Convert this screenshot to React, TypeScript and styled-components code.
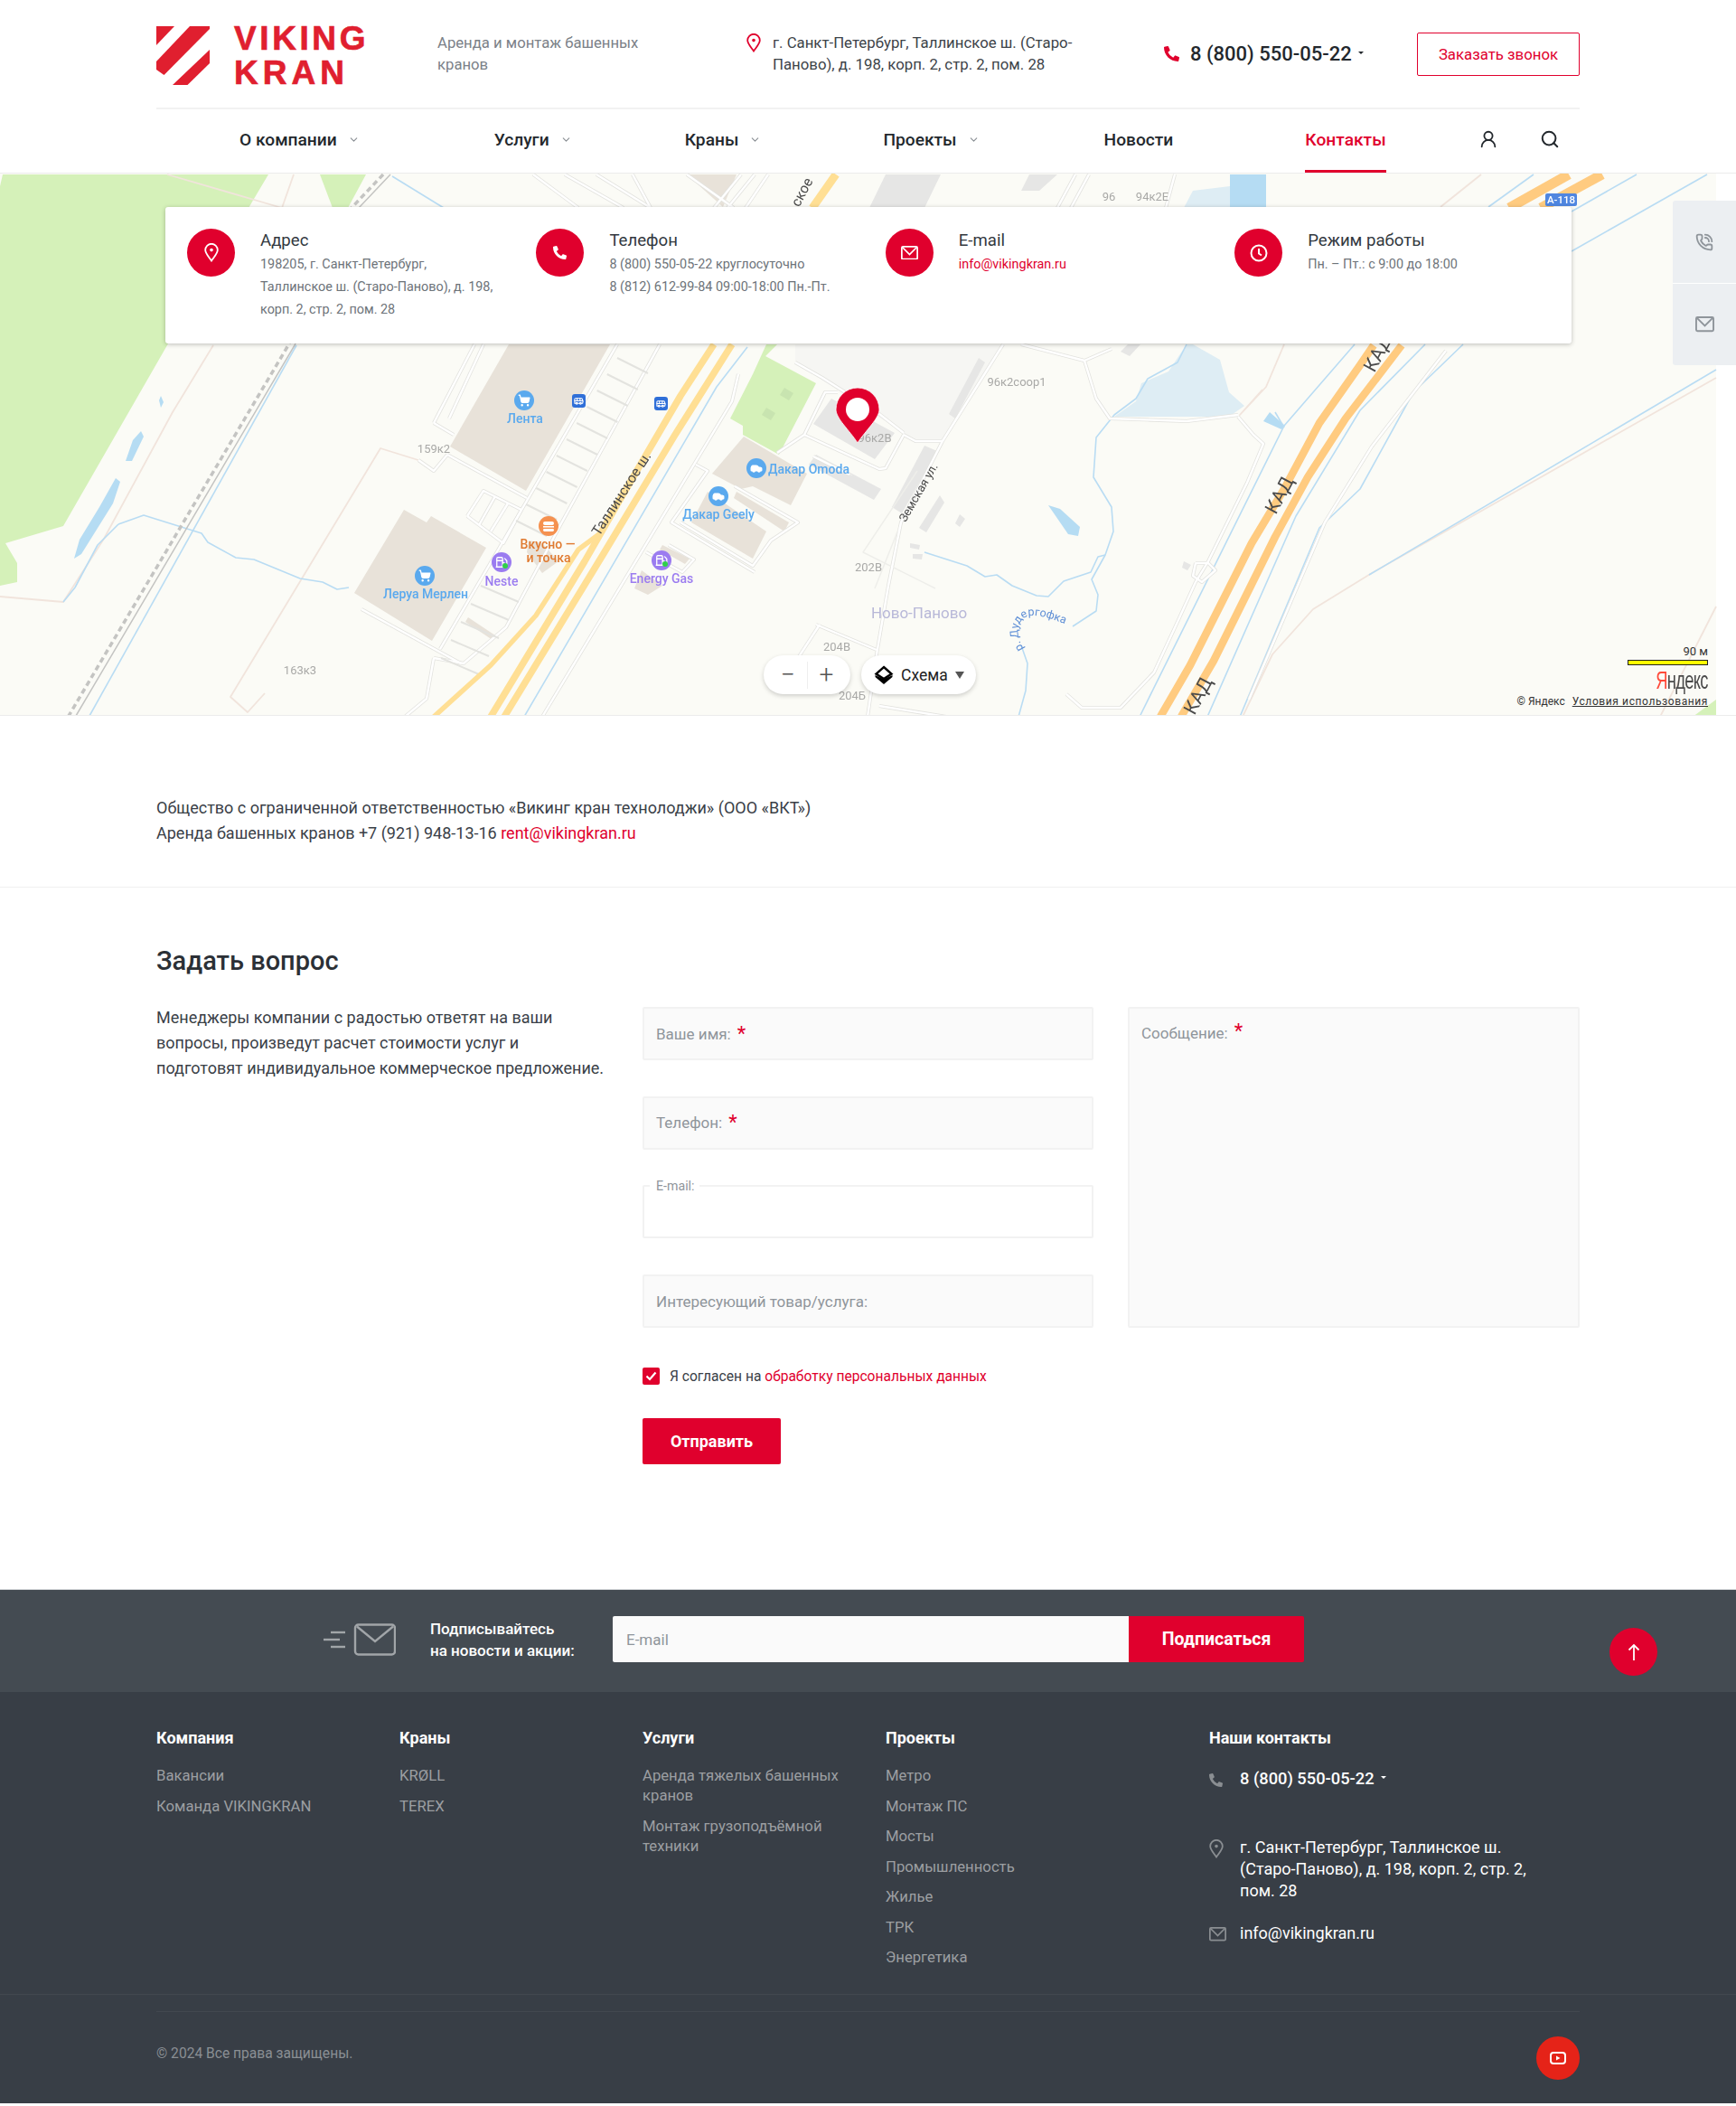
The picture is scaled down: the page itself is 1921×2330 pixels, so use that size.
import React from 'react';
import styled, { createGlobalStyle } from 'styled-components';
import { Bus, Car, ChevronDown, Fuel, PhoneCall, Search, ShoppingCart, UserRound } from 'lucide-react';
import { FaPhoneAlt } from 'react-icons/fa';

const RED = '#e0002d';

const GlobalStyle = createGlobalStyle`
  html, body {
    margin: 0;
    padding: 0;
    background: #fff;
    font-family: Roboto, "Liberation Sans", sans-serif;
    color: #33393f;
  }
  * {
    box-sizing: border-box;
  }
`;

const Container = styled.div`
  width: 1575px;
  margin: 0 auto;
`;

/* header */

const TopRow = styled.div`
  display: grid;
  grid-template-columns: 311px 342px 462px 280px 180px;
  align-items: center;
  height: 121px;
  border-bottom: 2px solid #f2f2f2;
`;

const Logo = styled.div`
  display: flex;
  align-items: center;
  gap: 27px;

  svg {
    margin-top: 3px;
  }
`;

const LogoText = styled.div`
  padding-top: 4px;
  font-family: "Liberation Sans", Arial, sans-serif;
  font-weight: 700;
  font-size: 37px;
  line-height: 38px;
  letter-spacing: 3.6px;
  color: #e01f2f;
  -webkit-text-stroke: 0.7px #e01f2f;

  span {
    letter-spacing: 5px;
  }
`;

const Tagline = styled.div`
  width: 240px;
  font-size: 16.7px;
  line-height: 24px;
  color: #7b8188;
`;

const HeadAddress = styled.div`
  display: flex;
  gap: 13px;
  margin-top: -2px;
  font-size: 16.8px;
  line-height: 24px;
  color: #3d4349;

  svg {
    flex: none;
    margin-top: 2px;
    color: ${RED};
  }
`;

const HeadPhone = styled.div`
  display: flex;
  align-items: center;
  gap: 12px;
  font-size: 22px;
  font-weight: 500;
  color: #23282d;

  svg {
    color: ${RED};
  }
`;

const Caret = styled.span`
  display: inline-block;
  margin: 0 0 6px 7px;
  border-left: 3px solid transparent;
  border-right: 3px solid transparent;
  border-top: 3px solid currentColor;
  vertical-align: middle;
`;

const CallButton = styled.div`
  display: flex;
  align-items: center;
  justify-content: center;
  height: 48px;
  border: 1px solid ${RED};
  border-radius: 2px;
  font-size: 16.8px;
  color: ${RED};
`;

const NavRow = styled.nav`
  display: flex;
  align-items: stretch;
  height: 70px;
  padding-left: 92px;
`;

const NavItem = styled.div<{ $left?: number; $active?: boolean }>`
  display: flex;
  align-items: center;
  gap: 12px;
  margin-left: ${(p) => p.$left ?? 0}px;
  border-bottom: 3px solid ${(p) => (p.$active ? RED : 'transparent')};
  font-size: 19.2px;
  font-weight: 500;
  color: ${(p) => (p.$active ? RED : '#23282d')};

  svg {
    color: #8a8f94;
  }
`;

const NavIcon = styled.div<{ $left: number }>`
  display: flex;
  align-items: center;
  margin-left: ${(p) => p.$left}px;
  margin-bottom: 4px;
  color: #23282d;
`;

/* map */

const MapSection = styled.section`
  position: relative;
  height: 601px;
  overflow: hidden;
  background: #fff;
  border-top: 1px solid #ececec;
  border-bottom: 1px solid #ececec;
`;

const MapCanvas = styled.svg`
  display: block;
  width: 1921px;
  height: 601px;
  filter: blur(0.35px);
`;

const InfoCard = styled.div`
  position: absolute;
  top: 37px;
  left: 183px;
  width: 1556px;
  height: 151px;
  display: grid;
  grid-template-columns: repeat(4, 386.4px);
  padding: 24px 0 0 24px;
  border-radius: 3px;
  background: #fff;
  box-shadow: 0 1px 5px rgba(0, 0, 0, 0.25);
`;

const InfoItem = styled.div`
  display: flex;
  gap: 28px;
`;

const InfoCircle = styled.div`
  flex: none;
  display: flex;
  align-items: center;
  justify-content: center;
  width: 53px;
  height: 53px;
  border-radius: 50%;
  background: ${RED};
  color: #fff;
`;

const InfoTitle = styled.div`
  margin-bottom: 1px;
  font-size: 18.6px;
  line-height: 26px;
  font-weight: 400;
  color: #33393f;
`;

const InfoLine = styled.div`
  font-size: 14.4px;
  line-height: 25px;
  color: #6d7379;

  a {
    color: ${RED};
  }
`;

const SideTabs = styled.div`
  position: absolute;
  top: 30px;
  right: 0;
  width: 70px;
  border-radius: 3px 0 0 3px;
  background: #eceff2;
  color: #8f959b;
`;

const SideTab = styled.div<{ $line?: boolean }>`
  display: flex;
  align-items: center;
  justify-content: center;
  height: 91px;
  border-top: ${(p) => (p.$line ? '1px solid #fff' : 'none')};
`;

const MapControls = styled.div`
  position: absolute;
  top: 533px;
  left: 845px;
  display: flex;
  gap: 12px;
`;

const Pill = styled.div`
  display: flex;
  align-items: center;
  height: 43px;
  padding: 0 6px;
  border-radius: 22px;
  background: #fff;
  box-shadow: 0 2px 5px rgba(0, 0, 0, 0.18);
  color: #222;
`;

const ZoomPart = styled.div<{ $line?: boolean }>`
  display: flex;
  align-items: center;
  justify-content: center;
  width: 42px;
  height: 30px;
  border-left: ${(p) => (p.$line ? '1px solid #eee' : 'none')};
  font-size: 28px;
  font-weight: 300;
  color: #555;
`;

const SchemaPill = styled(Pill)`
  gap: 8px;
  width: 127px;
  padding: 0 0 0 14px;
  font-size: 17.5px;
`;

const Attribution = styled.div`
  position: absolute;
  top: 522px;
  right: 31px;
  display: flex;
  flex-direction: column;
  align-items: flex-end;
  font-size: 12px;
  color: #333;
`;

const ScaleLabel = styled.div`
  font-size: 13px;
  line-height: 14px;
`;

const ScaleBar = styled.div`
  width: 89px;
  height: 6px;
  margin-top: 2px;
  border: 1px solid #222;
  background: #ffff00;
`;

const YandexMark = styled.div`
  margin-top: 4px;
  font-family: "Liberation Sans", sans-serif;
  font-size: 27px;
  line-height: 27px;
  letter-spacing: -1px;
  color: #4a4a4a;
  transform: scaleX(0.68);
  transform-origin: right center;

  span {
    color: #ff4a3a;
  }
`;

const Terms = styled.div`
  display: flex;
  gap: 8px;
  margin-top: 1px;
  line-height: 16px;

  u {
    letter-spacing: 0.6px;
  }
`;

/* text + form */

const CompanyInfo = styled.div`
  padding: 88px 0 45px;
  border-bottom: 1px solid #f0f0f0;
  font-size: 18px;
  line-height: 28px;
  color: #3a4047;

  a {
    color: ${RED};
  }
`;

const QuestionSection = styled.section`
  padding: 63px 0 138px;
`;

const Title = styled.h2`
  margin: 0 0 31px;
  font-size: 29px;
  line-height: 36px;
  font-weight: 500;
  color: #2b3036;
`;

const FormGrid = styled.div`
  display: grid;
  grid-template-columns: 538px 499px 538px;
`;

const Lead = styled.p`
  width: 498px;
  margin: 0;
  font-size: 18px;
  line-height: 28px;
  color: #3a4047;
`;

const FieldsCol = styled.div`
  display: flex;
  flex-direction: column;
  gap: 39.7px;
  padding-top: 2px;
  grid-column: 2;
`;

const Field = styled.div<{ $white?: boolean }>`
  position: relative;
  height: 59px;
  padding: 0 13px;
  border: 2px solid #f2f2f2;
  border-radius: 2px;
  background: ${(p) => (p.$white ? '#fff' : '#fafafa')};
  display: flex;
  align-items: center;
  font-size: 17px;
  color: #8f959b;
`;

const FloatLabel = styled.span`
  position: absolute;
  top: -8px;
  left: 6px;
  padding: 0 6px 0 7px;
  background: #fff;
  font-size: 14.2px;
  line-height: 14px;
  color: #8f959b;
`;

const Star = styled.span`
  margin-left: 7px;
  font-size: 22px;
  line-height: 16px;
  color: ${RED};
`;

const MessageCol = styled.div`
  padding: 2px 0 0 38px;
`;

const MessageField = styled(Field)`
  height: 355px;
  align-items: flex-start;
  padding-top: 17px;
  width: 100%;
`;

const Consent = styled.div`
  display: flex;
  align-items: center;
  gap: 11px;
  margin-top: 44px;
  font-size: 15.6px;
  color: #3a4047;

  a {
    color: ${RED};
  }
`;

const CheckBox = styled.span`
  display: flex;
  align-items: center;
  justify-content: center;
  width: 19px;
  height: 19px;
  border-radius: 2px;
  background: ${RED};
`;

const SubmitButton = styled.div`
  display: flex;
  align-items: center;
  justify-content: center;
  width: 153px;
  height: 51px;
  margin-top: 37px;
  border-radius: 2px;
  background: ${RED};
  font-size: 18px;
  font-weight: 700;
  color: #fff;
`;

const FormBottom = styled.div`
  grid-column: 2 / 4;
`;

/* footer */

const SubscribeBand = styled.section`
  position: relative;
  display: flex;
  align-items: center;
  height: 114px;
  padding: 0 0 4px 358px;
  border-top: 1px solid #d5d8da;
  background: #444b52;
`;

const SubscribeText = styled.div`
  width: 202px;
  margin-left: 38px;
  font-size: 17px;
  line-height: 24px;
  font-weight: 500;
  color: #fff;
`;

const SubscribeInput = styled.div`
  display: flex;
  align-items: center;
  width: 571px;
  height: 51px;
  padding-left: 15px;
  border-radius: 2px 0 0 2px;
  background: #fafafa;
  font-size: 17px;
  color: #8f959b;
`;

const SubscribeButton = styled.div`
  display: flex;
  align-items: center;
  justify-content: center;
  width: 194px;
  height: 51px;
  border-radius: 0 2px 2px 0;
  background: ${RED};
  font-size: 19.5px;
  font-weight: 700;
  color: #fff;
`;

const UpButton = styled.div`
  position: absolute;
  top: 42px;
  left: 1781px;
  display: flex;
  align-items: center;
  justify-content: center;
  width: 53px;
  height: 53px;
  border-radius: 50%;
  background: ${RED};
`;

const Footer = styled.footer`
  height: 455px;
  padding-top: 40px;
  background: #383e46;
`;

const FooterGrid = styled.div`
  display: grid;
  grid-template-columns: 269px 269px 269px 358px 1fr;
  height: 294px;
`;

const ColTitle = styled.div`
  margin-bottom: 20px;
  font-size: 18px;
  line-height: 22px;
  font-weight: 700;
  color: #fff;
`;

const ColLink = styled.div`
  width: 250px;
  margin-bottom: 11.5px;
  font-size: 16.7px;
  line-height: 22px;
  color: #9c9fa2;
`;

const ContactRow = styled.div<{ $top: number }>`
  display: flex;
  margin-top: ${(p) => p.$top}px;
  font-size: 18px;
  line-height: 24px;
  color: #fff;
`;

const ContactIcon = styled.div`
  flex: none;
  width: 34px;
  padding-top: 3px;
  color: #8a8e92;
`;

const PhoneText = styled.div`
  font-size: 18.3px;
  font-weight: 500;
`;

const FullLine = styled.div`
  height: 1px;
  background: #42484f;
`;

const BottomRow = styled.div`
  display: flex;
  align-items: center;
  justify-content: space-between;
  margin-top: 18px;
  padding-top: 27px;
  border-top: 1px solid #42484f;
`;

const Copyright = styled.div`
  margin-bottom: 10px;
  font-size: 15.6px;
  line-height: 22px;
  color: #8a8f94;
`;

const YoutubeCircle = styled.div`
  display: flex;
  align-items: center;
  justify-content: center;
  width: 48px;
  height: 48px;
  border-radius: 50%;
  background: #e52318;
`;

/* small drawings */

const Envelope = ({ size = 20, stroke = 2 }: { size?: number; stroke?: number }) => (
  <svg width={size} height={size * 0.82} viewBox="0 0 22 18" fill="none" stroke="currentColor" strokeWidth={stroke}>
    <rect x="1" y="1" width="20" height="16" rx="1.5" />
    <polyline points="2,2 11,11 20,2" />
  </svg>
);

const PinGlyph = ({ color = 'currentColor' }: { color?: string }) => (
  <svg width="16" height="21" viewBox="0 0 16 21" fill="none" stroke={color} strokeWidth="1.8">
    <path d="M8 19.5C5 15 1.2 11.5 1.2 7.6A6.8 6.8 0 0 1 14.8 7.6C14.8 11.5 11 15 8 19.5Z" />
    <circle cx="8" cy="7.6" r="1.8" fill={color} stroke="none" />
  </svg>
);

const ClockGlyph = () => (
  <svg width="20" height="20" viewBox="0 0 20 20" fill="none" stroke="#fff" strokeWidth="2">
    <circle cx="10" cy="10" r="8.5" />
    <polyline points="10,5 10,10.5 13,12.5" />
  </svg>
);

const LogoMark = () => (
  <svg width="59" height="65" viewBox="173 29 59 65" fill="#e01f2f">
    <polygon points="173,29 193,29 173,50" />
    <polygon points="210,29 232,29 232,32 181.5,83 173,77 173,68" />
    <polygon points="232,55 232,70 207.5,94 191,94" />
  </svg>
);

const MailStreak = () => (
  <svg width="80" height="36" viewBox="0 0 80 36" fill="none" stroke="#a1a5a8" strokeWidth="2.4">
    <rect x="35" y="1.5" width="44" height="33" rx="3.5" />
    <polyline points="37,3.5 57,20 77,3.5" />
    <line x1="8" y1="10" x2="24" y2="10" />
    <line x1="0" y1="18" x2="18" y2="18" />
    <line x1="8" y1="26" x2="24" y2="26" />
  </svg>
);

const SchemaGlyph = () => (
  <svg width="22" height="22" viewBox="0 0 22 22">
    <path d="M11 15.5 1.5 11V13L11 21 20.5 13V11Z" fill="#000" />
    <path d="M11 2 19.5 9.5 11 15 2.5 9.5Z" fill="#fff" stroke="#000" strokeWidth="2.4" />
  </svg>
);

/* map data, in page coordinates */

const roads = [
  '683,380 583,553 487,717',
  '730,380 620,580 560,693 513,733 480,727',
  '495,502 583,550',
  '463,508 480,520 495,502',
  '480,467 525,380',
  '497,462 535,380',
  '480,467 502,480',
  '400,673 510,733',
  '480,727 472,772 448,792',
  '517,570 535,542 577,563 557,600 517,570',
  '530,580 548,548',
  '543,587 562,556',
  '817,413 810,443 600,792',
  '770,513 783,520 743,577 835,632',
  '753,577 833,625 853,597 883,577 813,537',
  '740,602 768,618 755,632 715,610',
  '903,690 970,718',
  '907,690 883,727',
  '973,780 1047,792',
  '890,480 973,518 980,517 1000,480',
  '1000,480 1013,487 1043,487',
  '880,400 910,417 973,457 1000,478',
  '890,480 913,433 927,433',
  '860,500 890,480',
  '1110,380 1043,487 997,577 983,647 970,723 960,792',
  '1130,380 1200,398 1230,385',
  '1200,398 1213,440 1228,462 1313,465 1370,458',
  '1370,460 1387,480 1398,490 1380,533 1337,620 1323,643 1303,687 1277,743 1240,782 1197,782 1180,767',
  '1323,622 1337,622 1345,630 1330,643 1320,636 1323,622',
  '1600,387 1518,493 1466,577 1382,773',
  '900,504 940,524',
  '590,192 640,229',
  '625,192 690,229',
  '660,192 720,229',
  '700,192 720,229',
  '760,192 812,229',
  '820,192 790,229',
  '835,192 805,229',
  '850,192 825,229',
  '1190,192 1170,229',
  '1205,192 1185,229',
  '1300,192 1290,229',
];

const thinRoads = [
  '905,505 943,525',
  '1015,520 955,610 1035,650',
  '968,650 1000,570',
];

const pinkLines = [
  '185,192 312,229',
  '325,192 312,229',
  '236,381 191,455 115,595 70,665 0,659',
  '466,509 421,495 255,770 274,787 293,766',
  '1639,192 1594,228',
  '1421,380 1401,427 1372,458 1397,430',
  '1899,417 1518,633 1453,673 1408,723 1375,792',
  '1899,670 1837,792',
];

const streams = [
  '434,194 491,229',
  '328,381 99,791',
  '131,579 159,569 191,579 223,589 230,599 261,616 281,618 332,639 357,643 373,651 386,649',
  '131,579 108,602 83,649 70,665',
  '827,383 793,427 580,792',
  '1313,380 1303,400 1270,418 1257,440 1233,458 1213,483 1210,527 1230,560 1232,587 1223,613 1208,640 1215,657 1213,675 1187,692',
  '1130,713 1137,733 1135,763 1127,792',
  '1023,610 1070,625 1090,637 1103,635 1120,647 1147,658 1160,659 1177,642 1207,632 1215,615 1223,613',
  '1499,380 1421,470 1261,792',
  '1577,380 1505,453 1434,570 1336,792',
  '1619,380 1564,433 1505,540 1460,583 1372,792',
  '1697,192 1647,228',
  '1811,192 1739,233',
  '1889,192 1739,277',
  '1899,408 1515,635',
  '1411,455 1421,472',
];

const buildings = [
  '563,380 675,380 582,542 498,493',
  '760,192 815,192 800,228',
  '447,563 472,577 477,570 538,605 478,708 392,655',
  '823,482 893,523 875,558 833,537 820,540 788,523',
  '783,543 848,587 833,617 765,577',
  '815,543 873,577 868,587 812,550',
  '585,597 600,600 618,620 600,633 583,610',
  '733,602 763,617 758,623 730,607',
  '710,630 733,647 717,657 702,650',
  '518,682 548,702 545,707 515,687',
];

const grayBlocks = [
  '920,440 990,478 968,507 900,468',
  '903,502 975,540 967,552 895,513',
  '1023,492 1037,498 998,567 987,560',
  '1083,395 1090,400 1057,462 1050,457',
  '1040,547 1045,555 1025,588 1017,583',
  '1062,568 1068,573 1062,582 1057,578',
  '1007,600 1018,602 1017,607 1007,605',
  '1010,612 1021,612 1020,618 1010,617',
  '980,192 1041,192 1023,229 962,229',
  '1139,192 1170,192 1150,210 1130,210',
  '1248,380 1262,380 1250,393 1240,388',
  '1310,620 1318,624 1314,630 1308,627',
];

const rungs = Array.from({ length: 11 }, (_, i) => ({
  x1: 683 - i * 11.2,
  y1: 395 + i * 18,
  x2: 717 - i * 11.2,
  y2: 412 + i * 18,
}));

const lowerRungs = Array.from({ length: 5 }, (_, i) => ({
  x1: 532 - i * 11,
  y1: 647 + i * 20,
  x2: 574 - i * 11,
  y2: 665 + i * 20,
}));

const poi = [
  { x: 580, y: 442, c: '#5aa9ee', Icon: ShoppingCart, fill: '#fff' },
  { x: 470, y: 636, c: '#5aa9ee', Icon: ShoppingCart, fill: '#fff' },
  { x: 837, y: 517, c: '#5aa9ee', Icon: Car, fill: '#fff' },
  { x: 795, y: 548, c: '#5aa9ee', Icon: Car, fill: '#fff' },
  { x: 555, y: 621, c: '#9b7cf0', Icon: Fuel, fill: 'none' },
  { x: 732, y: 619, c: '#9b7cf0', Icon: Fuel, fill: 'none' },
];

const poiLabels = [
  { x: 581, y: 467, c: '#5aa9ee', t: 'Лента' },
  { x: 471, y: 661, c: '#5aa9ee', t: 'Леруа Мерлен' },
  { x: 895, y: 523, c: '#5aa9ee', t: 'Дакар Omoda' },
  { x: 795, y: 573, c: '#5aa9ee', t: 'Дакар Geely' },
  { x: 555, y: 647, c: '#9b7cf0', t: 'Neste' },
  { x: 732, y: 644, c: '#9b7cf0', t: 'Energy Gas' },
  { x: 606, y: 606, c: '#e07a30', t: 'Вкусно —' },
  { x: 607, y: 621, c: '#e07a30', t: 'и точка' },
];

const houseNumbers = [
  { x: 480, y: 500, t: '159к2' },
  { x: 1125, y: 426, t: '96к2соор1' },
  { x: 968, y: 488, t: '96к2В' },
  { x: 961, y: 631, t: '202В' },
  { x: 926, y: 719, t: '204В' },
  { x: 943, y: 773, t: '204Б' },
  { x: 332, y: 745, t: '163к3' },
  { x: 1227, y: 221, t: '96' },
  { x: 1275, y: 221, t: '94к2Е' },
];

const MapDrawing = () => (
  <MapCanvas viewBox="0 191 1921 601" fontFamily="Roboto, sans-serif">
    <rect x="0" y="191" width="1899" height="601" fill="#fbfbf6" />
    <polygon points="880,380 1110,380 1043,487 1013,487 880,400" fill="#f6f6f3" />
    <polygon points="3,192 297,192 185,381 70,581 6,600 19,622 19,643 0,647 0,205" fill="#d5f1b9" />
    <polygon points="354,192 405,192 385,229 368,229" fill="#d5f1b9" />
    <polygon points="847,393 903,423 862,502 822,480 822,470 808,462 833,413 848,380 860,380" fill="#d5f1b9" />
    <polygon points="1873,792 1899,773 1899,792" fill="#d5f1b9" />
    <polygon points="868,428 878,434 873,442 863,436" fill="#c8e4b0" />
    <polygon points="848,450 858,456 853,464 843,458" fill="#c8e4b0" />

    <polygon points="1320,380 1350,397 1360,433 1377,448 1360,460 1233,460 1257,443 1263,423 1293,410 1313,380" fill="#deedf4" />
    <polygon points="1361,192 1401,192 1401,229 1361,229" fill="#b5dcf3" />
    <polygon points="1320,210 1361,205 1361,229 1310,229" fill="#deedf4" />
    <polygon points="1160,558 1173,562 1195,582 1193,592 1182,590" fill="#b5dcf3" />
    <polygon points="1398,465 1405,455 1422,470 1418,474" fill="#b5dcf3" />
    <polygon points="178,437 181,444 178,450 176,442" fill="#b5dcf3" />
    <polygon points="156,476 159,482 146,509 139,509 147,486" fill="#b5dcf3" />
    <polygon points="128,528 133,532 125,556 90,612 82,617 88,596 110,560" fill="#b5dcf3" />

    {buildings.map((b) => (
      <polygon key={b} points={b} fill="#e8e2d9" />
    ))}
    {grayBlocks.map((b) => (
      <polygon key={b} points={b} fill="#e6e6e5" />
    ))}

    <g fill="none" strokeLinejoin="round">
      {pinkLines.map((l) => (
        <polyline key={l} points={l} stroke="#f1e4dc" strokeWidth="1.8" />
      ))}
      {streams.map((l) => (
        <polyline key={l} points={l} stroke="#b9dcf3" strokeWidth="1.6" />
      ))}
      <polyline points="424,192 389,229 319,381 76,791" stroke="#c4c4c2" strokeWidth="3.5" strokeDasharray="6 4" />
      <polyline points="432,192 397,229 326,381 84,791" stroke="#c4c4c2" strokeWidth="1.5" />
      {roads.map((l) => (
        <polyline key={l} points={l} stroke="#e3e3df" strokeWidth="4" />
      ))}
      {thinRoads.map((l) => (
        <polyline key={l} points={l} stroke="#eeeeea" strokeWidth="1.4" />
      ))}
      {roads.map((l) => (
        <polyline key={`${l}w`} points={l} stroke="#fff" strokeWidth="2.4" />
      ))}
      {rungs.concat(lowerRungs).map((r) => (
        <line key={r.x1} {...r} stroke="#e3e3df" strokeWidth="2" />
      ))}

      <polyline points="790,380 753,437 683,557 647,620 543,792" stroke="#ffdf94" strokeWidth="7.5" />
      <polyline points="810,380 747,480 667,613 558,792" stroke="#ffdf94" strokeWidth="7.5" />
      <polyline points="663,590 640,607 593,680 543,735 480,792" stroke="#ffdf94" strokeWidth="5.5" />
      <polyline points="925,192 899,229" stroke="#ffdf94" strokeWidth="9" />

      <polyline points="1520,381 1505,403 1460,467 1421,540 1385,600 1317,735 1284,792" stroke="#ffcb80" strokeWidth="8.5" />
      <polyline points="1551,381 1535,402 1489,462 1447,527 1411,593 1343,730 1307,792" stroke="#ffcb80" strokeWidth="8.5" />
      <polyline points="1736,192 1670,229" stroke="#ffcb80" strokeWidth="11" />
      <polyline points="1773,192 1705,229" stroke="#ffcb80" strokeWidth="11" />
    </g>

    <g fontSize="13" textAnchor="middle" fill="#a9a9a7">
      {houseNumbers.map((h) => (
        <text key={h.t} x={h.x} y={h.y}>
          {h.t}
        </text>
      ))}
    </g>

    {poi.map(({ x, y, c, Icon, fill }) => (
      <g key={`${x}-${y}`}>
        <circle cx={x} cy={y} r="11" fill={c} />
        <Icon x={x - 7} y={y - 7} width={14} height={14} color="#fff" fill={fill} strokeWidth={2.2} />
      </g>
    ))}
    <circle cx="607" cy="581" r="11" fill="#f5914f" />
    <rect x="601" y="576" width="12" height="4" rx="2" fill="#fff" />
    <rect x="601" y="581" width="12" height="1.6" fill="#fff" />
    <rect x="601" y="584" width="12" height="3" rx="1.4" fill="#fff" />
    <circle cx="559" cy="625" r="3" fill="#30d04a" />
    <circle cx="736" cy="623" r="3" fill="#30d04a" />

    <rect x="633" y="435" width="15" height="15" rx="3" fill="#2f6fd8" />
    <Bus x={635} y={437} width={11} height={11} color="#fff" strokeWidth={2.4} />
    <rect x="724" y="438" width="15" height="15" rx="3" fill="#2f6fd8" />
    <Bus x={726} y={440} width={11} height={11} color="#fff" strokeWidth={2.4} />

    <g fontSize="14" fontWeight="500" textAnchor="middle">
      {poiLabels.map((l) => (
        <text key={l.t} x={l.x} y={l.y} fill={l.c}>
          {l.t}
        </text>
      ))}
    </g>

    <g fill="#4a4a4a" textAnchor="middle">
      <text transform="translate(692 548) rotate(-57)" fontSize="15.5">
        Таллинское ш.
      </text>
      <text transform="translate(1020 546) rotate(-60)" fontSize="13">
        Земская ул.
      </text>
      <text transform="translate(892 214) rotate(-62)" fontSize="15.5">
        ское
      </text>
      <text transform="translate(1422 550) rotate(-62)" fontSize="21">
        КАД
      </text>
      <text transform="translate(1332 772) rotate(-62)" fontSize="21">
        КАД
      </text>
      <text transform="translate(1531 393) rotate(-62)" fontSize="21">
        КАД
      </text>
    </g>
    <text x="1017" y="683" fontSize="17" textAnchor="middle" fill="#b8b8d8">
      Ново-Паново
    </text>
    <path id="river-name" d="M1133 717C1120 697 1128 678 1145 680C1160 681 1175 688 1190 694" fill="none" />
    <text fontSize="12.5" fill="#5f8fd6">
      <textPath href="#river-name">р. Дудергофка</textPath>
    </text>

    <rect x="1710" y="213" width="35" height="14" rx="2" fill="#4f86e0" />
    <text x="1727.5" y="224" fontSize="11.5" fontWeight="500" textAnchor="middle" fill="#fff">
      А-118
    </text>

    <path
      d="M949 489C940 475 925 462 925 452A24 24 0 0 1 973 452C973 462 958 475 949 489Z"
      fill={RED}
      stroke="#fff"
      strokeWidth="0.8"
    />
    <circle cx="949" cy="452" r="13" fill="#fff" />
  </MapCanvas>
);

const infoItems = [
  {
    title: 'Адрес',
    icon: <PinGlyph color="#fff" />,
    lines: ['198205, г. Санкт-Петербург,', 'Таллинское ш. (Старо-Паново), д. 198,', 'корп. 2, стр. 2, пом. 28'],
  },
  {
    title: 'Телефон',
    icon: <FaPhoneAlt size={15} />,
    lines: ['8 (800) 550-05-22 круглосуточно', '8 (812) 612-99-84 09:00-18:00 Пн.-Пт.'],
  },
  {
    title: 'E-mail',
    icon: <Envelope size={19} />,
    lines: [<a key="mail">info@vikingkran.ru</a>],
  },
  {
    title: 'Режим работы',
    icon: <ClockGlyph />,
    lines: ['Пн. – Пт.: с 9:00 до 18:00'],
  },
];

const footerCols = [
  { title: 'Компания', links: ['Вакансии', 'Команда VIKINGKRAN'] },
  { title: 'Краны', links: ['KRØLL', 'TEREX'] },
  { title: 'Услуги', links: ['Аренда тяжелых башенных кранов', 'Монтаж грузоподъёмной техники'] },
  { title: 'Проекты', links: ['Метро', 'Монтаж ПС', 'Мосты', 'Промышленность', 'Жилье', 'ТРК', 'Энергетика'] },
];

const App = () => {
  return (
    <>
      <GlobalStyle />
      <Container>
        <TopRow>
          <Logo>
            <LogoMark />
            <LogoText>
              VIKING
              <br />
              <span>KRAN</span>
            </LogoText>
          </Logo>
          <Tagline>Аренда и монтаж башенных кранов</Tagline>
          <HeadAddress>
            <PinGlyph color={RED} />
            <div>
              г. Санкт-Петербург, Таллинское ш. (Старо-
              <br />
              Паново), д. 198, корп. 2, стр. 2, пом. 28
            </div>
          </HeadAddress>
          <HeadPhone>
            <FaPhoneAlt size={17} />
            <div>
              8 (800) 550-05-22
              <Caret />
            </div>
          </HeadPhone>
          <CallButton>Заказать звонок</CallButton>
        </TopRow>
        <NavRow>
          <NavItem>
            О компании <ChevronDown size={13} />
          </NavItem>
          <NavItem $left={149}>
            Услуги <ChevronDown size={13} />
          </NavItem>
          <NavItem $left={125}>
            Краны <ChevronDown size={13} />
          </NavItem>
          <NavItem $left={135}>
            Проекты <ChevronDown size={13} />
          </NavItem>
          <NavItem $left={138}>Новости</NavItem>
          <NavItem $left={146} $active>
            Контакты
          </NavItem>
          <NavIcon $left={102}>
            <UserRound size={22} strokeWidth={2} />
          </NavIcon>
          <NavIcon $left={46}>
            <Search size={22} strokeWidth={2.2} />
          </NavIcon>
        </NavRow>
      </Container>

      <MapSection>
        <MapDrawing />
        <InfoCard>
          {infoItems.map((item) => (
            <InfoItem key={item.title}>
              <InfoCircle>{item.icon}</InfoCircle>
              <div>
                <InfoTitle>{item.title}</InfoTitle>
                {item.lines.map((line, i) => (
                  <InfoLine key={i}>{line}</InfoLine>
                ))}
              </div>
            </InfoItem>
          ))}
        </InfoCard>
        <SideTabs>
          <SideTab>
            <PhoneCall size={20} strokeWidth={2.2} />
          </SideTab>
          <SideTab $line>
            <Envelope size={21} />
          </SideTab>
        </SideTabs>
        <MapControls>
          <Pill>
            <ZoomPart>−</ZoomPart>
            <ZoomPart $line>+</ZoomPart>
          </Pill>
          <SchemaPill>
            <SchemaGlyph />
            Схема
            <svg width="10" height="8" viewBox="0 0 10 8">
              <polygon points="0,0 10,0 5,8" fill="#555" />
            </svg>
          </SchemaPill>
        </MapControls>
        <Attribution>
          <ScaleLabel>90 м</ScaleLabel>
          <ScaleBar />
          <YandexMark>
            <span>Я</span>ндекс
          </YandexMark>
          <Terms>
            <span>© Яндекс</span>
            <u>Условия использования</u>
          </Terms>
        </Attribution>
      </MapSection>

      <CompanyInfo>
        <Container>
          Общество с ограниченной ответственностью «Викинг кран технолоджи» (ООО «ВКТ»)
          <br />
          Аренда башенных кранов +7 (921) 948-13-16 <a>rent@vikingkran.ru</a>
        </Container>
      </CompanyInfo>

      <Container>
        <QuestionSection>
          <Title>Задать вопрос</Title>
          <FormGrid>
            <Lead>
              Менеджеры компании с радостью ответят на ваши вопросы, произведут расчет стоимости услуг и подготовят
              индивидуальное коммерческое предложение.
            </Lead>
            <FieldsCol>
              <Field>
                Ваше имя:<Star>*</Star>
              </Field>
              <Field>
                Телефон:<Star>*</Star>
              </Field>
              <Field $white>
                <FloatLabel>E-mail:</FloatLabel>
              </Field>
              <Field>Интересующий товар/услуга:</Field>
            </FieldsCol>
            <MessageCol>
              <MessageField>
                Сообщение:<Star>*</Star>
              </MessageField>
            </MessageCol>
            <FormBottom>
              <Consent>
                <CheckBox>
                  <svg width="13" height="11" viewBox="0 0 13 11" fill="none" stroke="#fff" strokeWidth="2.2">
                    <polyline points="1.5,5.5 5,9 11.5,1.5" />
                  </svg>
                </CheckBox>
                <div>
                  Я согласен на <a>обработку персональных данных</a>
                </div>
              </Consent>
              <SubmitButton>Отправить</SubmitButton>
            </FormBottom>
          </FormGrid>
        </QuestionSection>
      </Container>

      <SubscribeBand>
        <MailStreak />
        <SubscribeText>
          Подписывайтесь
          <br />
          на новости и акции:
        </SubscribeText>
        <SubscribeInput>E-mail</SubscribeInput>
        <SubscribeButton>Подписаться</SubscribeButton>
        <UpButton>
          <svg width="14" height="20" viewBox="0 0 14 20" fill="none" stroke="#fff" strokeWidth="1.8">
            <line x1="7" y1="2" x2="7" y2="19" />
            <polyline points="1.5,7.5 7,2 12.5,7.5" />
          </svg>
        </UpButton>
      </SubscribeBand>

      <Footer>
        <Container>
          <FooterGrid>
            {footerCols.map((col) => (
              <div key={col.title}>
                <ColTitle>{col.title}</ColTitle>
                {col.links.map((link) => (
                  <ColLink key={link}>{link}</ColLink>
                ))}
              </div>
            ))}
            <div>
              <ColTitle>Наши контакты</ColTitle>
              <ContactRow $top={22}>
                <ContactIcon>
                  <FaPhoneAlt size={15} />
                </ContactIcon>
                <PhoneText>
                  8 (800) 550-05-22
                  <Caret />
                </PhoneText>
              </ContactRow>
              <ContactRow $top={49}>
                <ContactIcon>
                  <PinGlyph />
                </ContactIcon>
                <div>
                  г. Санкт-Петербург, Таллинское ш.
                  <br />
                  (Старо-Паново), д. 198, корп. 2, стр. 2,
                  <br />
                  пом. 28
                </div>
              </ContactRow>
              <ContactRow $top={23}>
                <ContactIcon>
                  <Envelope size={19} />
                </ContactIcon>
                <div>info@vikingkran.ru</div>
              </ContactRow>
            </div>
          </FooterGrid>
        </Container>
        <FullLine />
        <Container>
          <BottomRow>
            <Copyright>© 2024 Все права защищены.</Copyright>
            <YoutubeCircle>
              <svg width="18" height="14" viewBox="0 0 18 14" fill="none">
                <rect x="1" y="1" width="16" height="12" rx="3" stroke="#fff" strokeWidth="2" />
                <polygon points="7,4.5 11.5,7 7,9.5" fill="#fff" />
              </svg>
            </YoutubeCircle>
          </BottomRow>
        </Container>
      </Footer>
    </>
  );
};

export default App;
